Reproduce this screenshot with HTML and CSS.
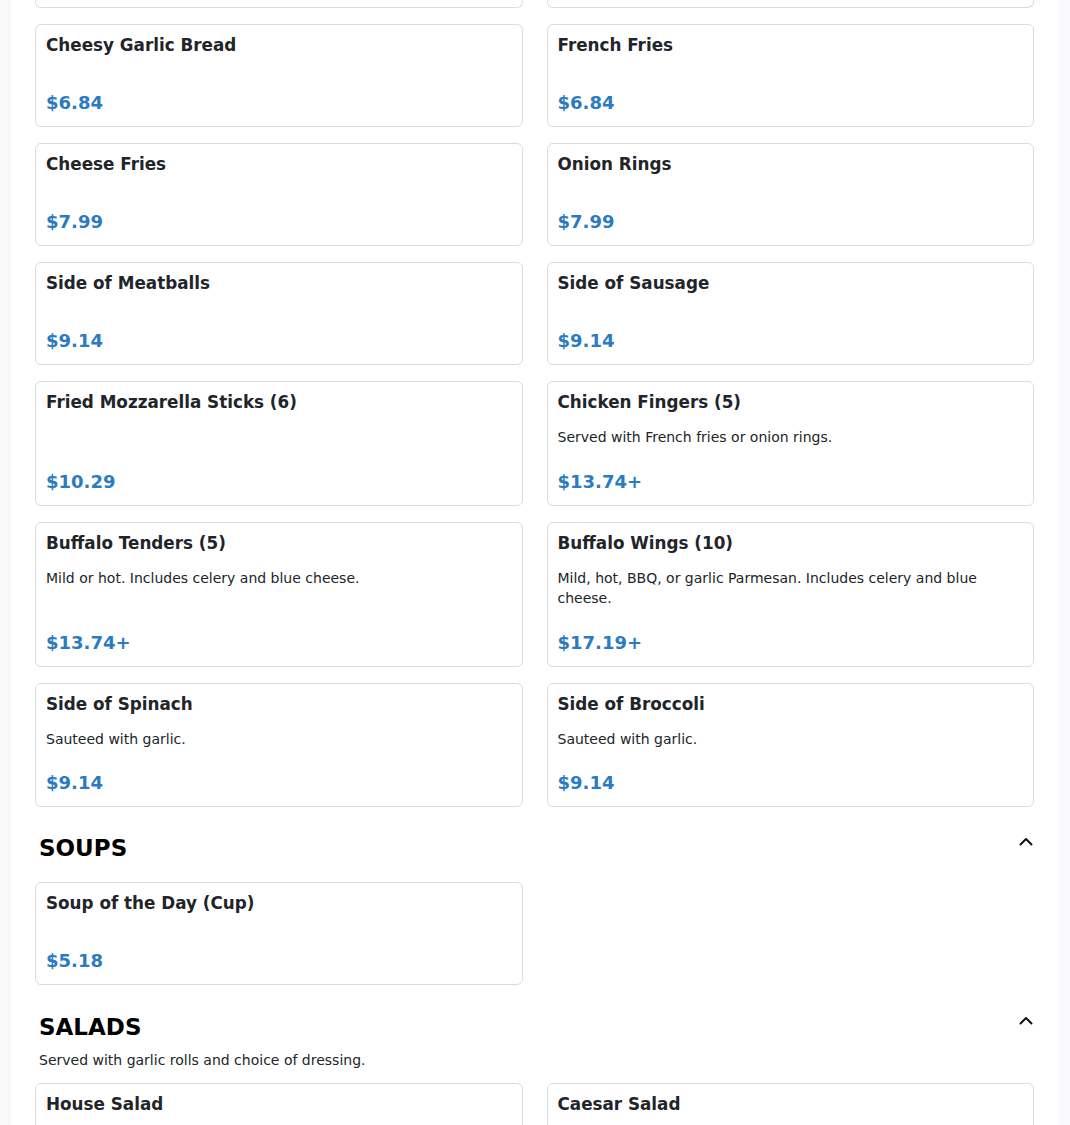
FILE: index.html
```html
<!DOCTYPE html>
<html lang="en">
<head>
<meta charset="utf-8">
<title>Menu</title>
<link rel="stylesheet" href="styles.css">
</head>
<body>
<main class="page">
  <section class="section">
    <div class="grid">
      <div class="card card-tail"></div>
      <div class="card card-tail"></div>

      <div class="card"><h3 class="item-title">Cheesy Garlic Bread</h3><div class="price">$6.84</div></div>
      <div class="card"><h3 class="item-title">French Fries</h3><div class="price">$6.84</div></div>

      <div class="card"><h3 class="item-title">Cheese Fries</h3><div class="price">$7.99</div></div>
      <div class="card"><h3 class="item-title">Onion Rings</h3><div class="price">$7.99</div></div>

      <div class="card"><h3 class="item-title">Side of Meatballs</h3><div class="price">$9.14</div></div>
      <div class="card"><h3 class="item-title">Side of Sausage</h3><div class="price">$9.14</div></div>

      <div class="card"><h3 class="item-title">Fried Mozzarella Sticks (6)</h3><div class="price">$10.29</div></div>
      <div class="card"><h3 class="item-title">Chicken Fingers (5)</h3><p class="item-desc">Served with French fries or onion rings.</p><div class="price">$13.74+</div></div>

      <div class="card"><h3 class="item-title">Buffalo Tenders (5)</h3><p class="item-desc">Mild or hot. Includes celery and blue cheese.</p><div class="price">$13.74+</div></div>
      <div class="card"><h3 class="item-title">Buffalo Wings (10)</h3><p class="item-desc">Mild, hot, BBQ, or garlic Parmesan. Includes celery and blue cheese.</p><div class="price">$17.19+</div></div>

      <div class="card"><h3 class="item-title">Side of Spinach</h3><p class="item-desc">Sauteed with garlic.</p><div class="price">$9.14</div></div>
      <div class="card"><h3 class="item-title">Side of Broccoli</h3><p class="item-desc">Sauteed with garlic.</p><div class="price">$9.14</div></div>
    </div>
  </section>

  <section class="section section-spaced">
    <div class="section-header">
      <div class="section-text">
        <h2 class="section-title">SOUPS</h2>
      </div>
      <button class="toggle" aria-label="Collapse">
        <svg width="14" height="14" viewBox="0 0 14 14"><path d="M1.5 9.5 L7 4 L12.5 9.5" fill="none" stroke="#111" stroke-width="2" stroke-linecap="round" stroke-linejoin="round"/></svg>
      </button>
    </div>
    <div class="grid">
      <div class="card"><h3 class="item-title">Soup of the Day (Cup)</h3><div class="price">$5.18</div></div>
    </div>
  </section>

  <section class="section section-spaced">
    <div class="section-header with-desc">
      <div class="section-text">
        <h2 class="section-title">SALADS</h2>
        <p class="section-desc">Served with garlic rolls and choice of dressing.</p>
      </div>
      <button class="toggle" aria-label="Collapse">
        <svg width="14" height="14" viewBox="0 0 14 14"><path d="M1.5 9.5 L7 4 L12.5 9.5" fill="none" stroke="#111" stroke-width="2" stroke-linecap="round" stroke-linejoin="round"/></svg>
      </button>
    </div>
    <div class="grid">
      <div class="card card-tall"><h3 class="item-title">House Salad</h3></div>
      <div class="card card-tall"><h3 class="item-title">Caesar Salad</h3></div>
    </div>
  </section>
</main>
</body>
</html>
```

FILE: styles.css
```css
html, body {
  margin: 0;
  padding: 0;
}

body {
  background: #f8f9fa;
  font-family: "DejaVu Sans", "Liberation Sans", sans-serif;
  color: #212529;
  height: 100vh;
  overflow: hidden;
}

.page {
  margin: 0 11px;
  background: #ffffff;
  padding: 0 25px 0 24px;
  min-height: 100vh;
}

.grid {
  display: grid;
  grid-template-columns: 1fr 1fr;
  column-gap: 24px;
  row-gap: 16px;
}

.card {
  border: 1px solid #dcdcdc;
  border-radius: 6px;
  padding: 10px 10px 12px;
  display: flex;
  flex-direction: column;
  background: #fff;
}

.card-tail {
  border-top: none;
  border-radius: 0 0 6px 6px;
  padding: 0;
  height: 7px;
}

.card-tall {
  min-height: 120px;
}

.item-title {
  margin: 0 0 14px;
  font-size: 16.8px;
  line-height: 21px;
  font-weight: bold;
  color: #212529;
}

.item-desc {
  margin: 0 0 1px;
  font-size: 14px;
  line-height: 20.5px;
  color: #212529;
}

.price {
  margin-top: auto;
  padding-top: 22px;
  font-size: 18px;
  line-height: 22px;
  font-weight: bold;
  color: #2b7bc3;
}

.section-spaced {
  margin-top: 27px;
}

.section-header {
  display: flex;
  justify-content: space-between;
  align-items: flex-start;
  padding: 0 1px 0 4px;
  margin-bottom: 20px;
}

.section-header.with-desc {
  padding-top: 1px;
  margin-bottom: 12px;
}

.section-title {
  margin: 0;
  font-size: 23px;
  line-height: 28px;
  font-weight: bold;
  color: #000;
}

.section-desc {
  margin: 9px 0 0;
  font-size: 14px;
  line-height: 21px;
  color: #212529;
}

.toggle {
  border: none;
  background: none;
  padding: 0;
  margin: 1px 0 0;
  width: 14px;
  height: 14px;
  display: flex;
  cursor: pointer;
}
```
